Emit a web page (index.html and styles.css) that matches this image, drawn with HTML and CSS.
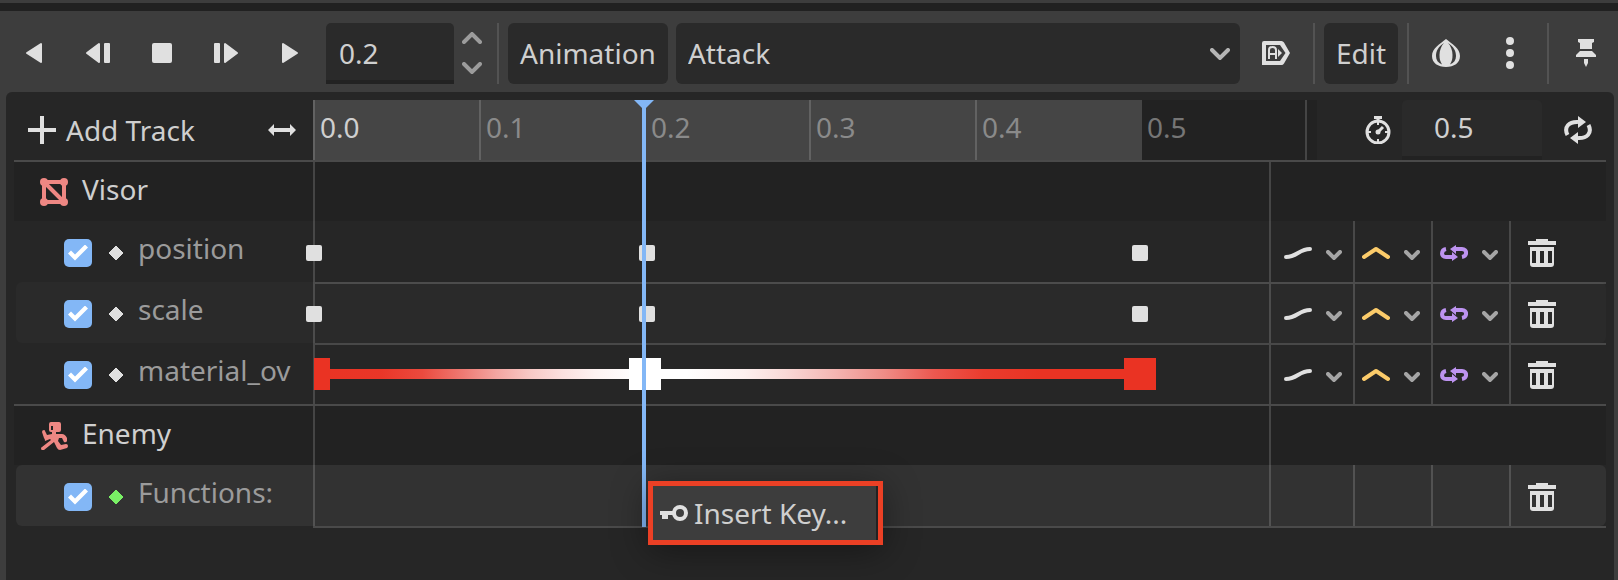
FILE: index.html
```
<!DOCTYPE html>
<html lang="en">
<head>
<meta charset="utf-8">
<title>Animation Editor</title>
<link rel="stylesheet" href="styles.css">
</head>
<body>
<svg class="defs" aria-hidden="true">
  <symbol id="i-chevron" viewBox="0 0 20 12"><path d="M2 2l8 8 8-8" fill="none" stroke="currentColor" stroke-width="4" stroke-linecap="round"/></symbol>
  <symbol id="i-chevron-small" viewBox="0 0 16 10"><path d="M2 2l6 6 6-6" fill="none" stroke="currentColor" stroke-width="4" stroke-linecap="round"/></symbol>
  <symbol id="i-diamond" viewBox="0 0 16 16"><path d="M8 1l7 7-7 7-7-7z" fill="currentColor" stroke="currentColor" stroke-linejoin="round"/></symbol>
  <symbol id="i-curve" viewBox="0 0 28 28"><path d="M2 18C13 18 15 10 26 10" fill="none" stroke="currentColor" stroke-width="4" stroke-linecap="round"/></symbol>
  <symbol id="i-peak" viewBox="0 0 28 28"><path d="M2 18L14 10l12 8" fill="none" stroke="currentColor" stroke-width="4" stroke-linecap="round" stroke-linejoin="round"/></symbol>
  <symbol id="i-wrap" viewBox="0 0 28 28"><g fill="none" stroke="currentColor" stroke-width="4"><path d="M6 10C1 11 .5 18 6 18h7M22 18C27.500 17 27.500 10 22 10h-7"/></g><path d="M12 13l6 5-6 4zM16 6v9l-6-5z" fill="currentColor"/></symbol>
  <symbol id="i-trash" viewBox="0 0 28 28"><path d="M8 0h12v2h8v4H0V2h8zM2 8h24v17q0 3-3 3H5q-3 0-3-3zM4 12v12h4V12zm8 0v12h4V12zm8 0v12h4V12z" fill="currentColor" fill-rule="evenodd"/></symbol>
</svg>

<header class="toolbar">
  <button class="tool" aria-label="Play backwards"><svg width="28" height="28" viewBox="0 0 28 28"><path d="M21 5v18L7 14z" class="solid"/></svg></button>
  <button class="tool" aria-label="Step back"><svg width="28" height="28" viewBox="0 0 28 28"><path d="M15 5v18L3 14z" class="solid"/><rect x="20" y="4" width="6" height="20" rx="1" fill="currentColor"/></svg></button>
  <button class="tool" aria-label="Stop"><svg width="28" height="28" viewBox="0 0 28 28"><rect x="4" y="4" width="20" height="20" rx="2" fill="currentColor"/></svg></button>
  <button class="tool" aria-label="Step forward"><svg width="28" height="28" viewBox="0 0 28 28"><path d="M13 5v18l12-9z" class="solid"/><rect x="2" y="4" width="6" height="20" rx="1" fill="currentColor"/></svg></button>
  <button class="tool" aria-label="Play"><svg width="28" height="28" viewBox="0 0 28 28"><path d="M7 5v18l14-9z" class="solid"/></svg></button>
  <div class="spin">
    <input class="field" type="text" value="0.2" aria-label="Current time">
    <div class="spin-arrows">
      <button class="arrow up" aria-label="Increase"><svg width="20" height="12"><use href="#i-chevron"/></svg></button>
      <button class="arrow" aria-label="Decrease"><svg width="20" height="12"><use href="#i-chevron"/></svg></button>
    </div>
  </div>
  <span class="sep"></span>
  <button class="btn">Animation</button>
  <div class="picker">
    <select class="select" aria-label="Animation name"><option>Attack</option></select>
    <svg class="picker-arrow" width="20" height="12"><use href="#i-chevron"/></svg>
  </div>
  <button class="tool" aria-label="Autoplay on load"><svg width="28" height="28" viewBox="0 0 28 28"><path d="M2 2h17.500q1.500 0 2.500 1.500l6 10.500-6 10.500q-1 1.500-2.500 1.500H0V4q0-2 2-2zM4 6v16h14l5.500-8L18 6z" fill="currentColor" fill-rule="evenodd"/><path d="M7 20v-9q0-3 3.500-3t3.500 3v9M7 15h7" fill="none" stroke="currentColor" stroke-width="2"/><path d="M16 10l4 4-4 4z" fill="currentColor"/></svg></button>
  <span class="sep"></span>
  <button class="btn">Edit</button>
  <span class="sep"></span>
  <button class="tool" aria-label="Onion skinning"><svg width="28" height="28" viewBox="0 0 28 28"><path d="M14 0C20 5 28 9 28 17c0 7-6 11-14 11S0 24 0 17C0 9 8 5 14 0z" fill="currentColor"/><path d="M12 4C6 8 4 12 4 17c0 4 2 7 6 8.500C8 22 7.500 20 7.500 16 7.500 12 9 7 12 4zM16 4c6 4 8 8 8 13 0 4-2 7-6 8.500 2-3.500 2.500-5.500 2.500-9.500 0-4-1.500-9-4.500-12z" fill="#3d3d3d"/></svg></button>
  <button class="tool" aria-label="Onion skinning options"><svg width="28" height="32" viewBox="0 0 28 32"><g fill="currentColor"><circle cx="14" cy="4" r="4"/><circle cx="14" cy="16" r="4"/><circle cx="14" cy="28" r="4"/></g></svg></button>
  <span class="sep"></span>
  <button class="tool" aria-label="Pin"><svg width="28" height="28" viewBox="0 0 28 28"><path d="M6 0h16v3l-2 1v6H8V4L6 3zM8 12h12l4 4v2H4v-2zM12 20h4v4l-2 4-2-4z" fill="currentColor"/></svg></button>
</header>

<main class="panel">
  <div class="editor">
    <div class="head">
      <div class="head-name">
        <button class="add"><svg width="28" height="28" viewBox="0 0 28 28"><path d="M14 0v28M0 14h28" stroke="currentColor" stroke-width="4"/></svg>Add Track</button>
        <svg width="28" height="14" viewBox="0 0 28 14"><path d="M0 7l6-6v4h16V1l6 6-6 6V9H6v4z" fill="currentColor"/></svg>
      </div>
      <div class="ruler">
        <div class="range"><span class="now">0.0</span><span>0.1</span><span>0.2</span><span>0.3</span><span>0.4</span></div>
        <span class="after">0.5</span><span class="tail"></span>
      </div>
      <div class="length">
        <svg width="28" height="28" viewBox="0 0 28 28"><g fill="none" stroke="currentColor"><circle cx="14" cy="16" r="11" stroke-width="3"/><path d="M14 1v5M10 1.500h8M14 16l5-5" stroke-width="3"/><path d="M14 6v3M14 23v3M3 16h4M21 16h4" stroke-width="2"/></g><circle cx="14" cy="16" r="2.500" fill="currentColor"/></svg>
        <input class="field length-field" type="text" value="0.5" aria-label="Animation length">
        <button class="tool" aria-label="Loop"><svg width="28" height="28" viewBox="0 0 28 28"><g fill="none" stroke="currentColor" stroke-width="4"><path d="M3.500 19C-.5 11 5 5.500 14 6M24.500 9C28.500 17 23 22.500 14 22"/></g><path d="M14 0l8 6-8 6zM14 16v12l-8-6z" fill="currentColor"/></svg></button>
      </div>
    </div>

    <div class="row group">
      <div class="name"><svg width="28" height="28" viewBox="0 0 28 28"><path d="M4 4h20v20H4zl20 20" fill="none" stroke="currentColor" stroke-width="4"/><g fill="currentColor"><circle cx="4" cy="4" r="4"/><circle cx="24" cy="4" r="4"/><circle cx="4" cy="24" r="4"/><circle cx="24" cy="24" r="4"/></g></svg><span>Visor</span></div>
      <div class="lane"></div><div class="cell"></div>
    </div>

    <div class="row track bare">
      <div class="name"><input type="checkbox" id="t1" checked><svg class="kind" width="16" height="16"><use href="#i-diamond"/></svg><label for="t1">position</label></div>
      <div class="lane"><i class="key" style="--t:0"></i><i class="key" style="--t:.2015"></i><i class="key" style="--t:.5"></i></div>
      <button class="cell" aria-label="Update mode"><svg width="28" height="28"><use href="#i-curve"/></svg><svg class="small" width="16" height="10"><use href="#i-chevron-small"/></svg></button>
      <button class="cell peak" aria-label="Interpolation"><svg width="28" height="28"><use href="#i-peak"/></svg><svg class="small" width="16" height="10"><use href="#i-chevron-small"/></svg></button>
      <button class="cell wrap" aria-label="Loop wrap"><svg width="28" height="28"><use href="#i-wrap"/></svg><svg class="small" width="16" height="10"><use href="#i-chevron-small"/></svg></button>
      <button class="cell bin" aria-label="Delete track"><svg width="28" height="28"><use href="#i-trash"/></svg></button>
    </div>

    <div class="row track odd">
      <div class="name"><input type="checkbox" id="t2" checked><svg class="kind" width="16" height="16"><use href="#i-diamond"/></svg><label for="t2">scale</label></div>
      <div class="lane"><i class="key" style="--t:0"></i><i class="key" style="--t:.2015"></i><i class="key" style="--t:.5"></i></div>
      <button class="cell" aria-label="Update mode"><svg width="28" height="28"><use href="#i-curve"/></svg><svg class="small" width="16" height="10"><use href="#i-chevron-small"/></svg></button>
      <button class="cell peak" aria-label="Interpolation"><svg width="28" height="28"><use href="#i-peak"/></svg><svg class="small" width="16" height="10"><use href="#i-chevron-small"/></svg></button>
      <button class="cell wrap" aria-label="Loop wrap"><svg width="28" height="28"><use href="#i-wrap"/></svg><svg class="small" width="16" height="10"><use href="#i-chevron-small"/></svg></button>
      <button class="cell bin" aria-label="Delete track"><svg width="28" height="28"><use href="#i-trash"/></svg></button>
    </div>

    <div class="row track">
      <div class="name"><input type="checkbox" id="t3" checked><svg class="kind" width="16" height="16"><use href="#i-diamond"/></svg><label for="t3">material_ov</label></div>
      <div class="lane"><i class="blend"></i><i class="swatch first" style="--t:0"></i><i class="swatch white" style="--t:.2003"></i><i class="swatch" style="--t:.5"></i></div>
      <button class="cell" aria-label="Update mode"><svg width="28" height="28"><use href="#i-curve"/></svg><svg class="small" width="16" height="10"><use href="#i-chevron-small"/></svg></button>
      <button class="cell peak" aria-label="Interpolation"><svg width="28" height="28"><use href="#i-peak"/></svg><svg class="small" width="16" height="10"><use href="#i-chevron-small"/></svg></button>
      <button class="cell wrap" aria-label="Loop wrap"><svg width="28" height="28"><use href="#i-wrap"/></svg><svg class="small" width="16" height="10"><use href="#i-chevron-small"/></svg></button>
      <button class="cell bin" aria-label="Delete track"><svg width="28" height="28"><use href="#i-trash"/></svg></button>
    </div>

    <div class="row group">
      <div class="name"><svg width="28" height="28" viewBox="0 0 28 28"><path d="M11 0h8q2 0 2 2v6q0 2-2 2h-3v2h6q3 0 5 4v3q-1 2-3 1l-2-4h-3l-1 3 3 4 5-1q2 0 2 2 0 1-1 2l-7 2q-2 0-3-2l-3-6-10 8q-2 1-3-1 0-2 1-2l9-7-1-1-5 2Q5 17 4 16L2 10q0-2 2-2 1 0 1 1l2 4 5-1V10H11q-2 0-2-2V2q0-2 2-2zM11 4v4h2V4z" fill="currentColor" fill-rule="evenodd"/></svg><span>Enemy</span></div>
      <div class="lane"></div><div class="cell"></div>
    </div>

    <div class="row track bare selected">
      <div class="name"><input type="checkbox" id="t4" checked><svg class="kind green" width="16" height="16"><use href="#i-diamond"/></svg><label for="t4">Functions:</label></div>
      <div class="lane"></div>
      <div class="cell"></div><div class="cell"></div><div class="cell"></div>
      <button class="cell bin" aria-label="Delete track"><svg width="28" height="28"><use href="#i-trash"/></svg></button>
    </div>
    <div class="end"></div>

    <div class="playhead"></div>
    <div class="menu"><button class="menu-item"><svg width="28" height="16" viewBox="0 0 28 16"><circle cx="20" cy="8" r="6" fill="none" stroke="currentColor" stroke-width="4"/><path d="M0 6h14v4H8v4H2v-4H0z" fill="currentColor"/></svg>Insert Key...</button></div>
  </div>
</main>
</body>
</html>
```
FILE: styles.css
```
* { box-sizing: border-box; }

body {
  --line: rgba(255, 255, 255, .16);
  --text: #cfcfcf;
  --icon: #e0e0e0;
  margin: 0;
  min-height: 100vh;
  display: flex;
  flex-direction: column;
  background: #3d3d3d;
  color: var(--text);
  font: 28px/38px "Noto Sans", sans-serif;
  overflow: hidden;
}

body::before {
  content: "";
  height: 8px;
  margin-top: 3px;
  background: #212121;
}

button, input, select {
  margin: 0;
  padding: 0;
  border: 0;
  background: none;
  color: inherit;
  font: inherit;
}

svg { display: block; flex: none; }
.defs { position: absolute; width: 0; height: 0; }
.solid { fill: currentColor; stroke: currentColor; stroke-width: 2; stroke-linejoin: round; }

.toolbar {
  display: flex;
  gap: 8px;
  padding: 12px 4px 8px 6px;
}

.tool {
  flex: none;
  width: 56px;
  display: flex;
  align-items: center;
  justify-content: center;
  color: var(--icon);
}
.toolbar .tool { padding-bottom: 1px; }

.sep {
  flex: none;
  width: 4px;
  border: solid transparent;
  border-width: 0 1px;
  background: #535353;
  background-clip: padding-box;
}

.field {
  width: 128px;
  height: 61px;
  padding-left: 13px;
  border-bottom: 4px solid #222;
  border-radius: 5px 5px 0 0;
  background: #2a2a2a;
}

.toolbar .field { padding-top: 2px; }
.spin { display: flex; gap: 8px; width: 162px; }
.spin-arrows { display: flex; flex-direction: column; justify-content: center; gap: 18px; padding-bottom: 1px; }
.arrow { color: #9c9c9c; }
.up svg { transform: rotate(180deg); }

.btn, .select {
  border-radius: 6px;
  background: #2a2a2a;
  padding: 0 12px 1px;
}

.picker { flex: 1; display: grid; align-items: center; }
.picker > * { grid-area: 1 / 1; }
.select { width: 100%; height: 61px; appearance: none; }
.picker-arrow { justify-self: end; margin-right: 10px; color: #b5b5b5; pointer-events: none; }

.panel {
  flex: 1;
  margin: 0 4px 0 6px;
  padding: 8px;
  border-radius: 6px 6px 0 0;
  background: #262626;
}

.editor { position: relative; }

.head { display: flex; height: 60px; color: var(--icon); }
.head-name {
  flex: 0 0 299px;
  display: flex;
  align-items: center;
  justify-content: space-between;
  padding: 0 17px 0 14px;
}
.add { display: flex; align-items: center; gap: 10px; color: var(--text); }
.add svg { color: var(--icon); }

.ruler {
  flex: 1;
  display: flex;
  background: #222;
  color: #767676;
  line-height: 54px;
}
.range {
  flex: 0 0 829px;
  display: grid;
  grid-template-columns: 166px 165px 165px 166px 1fr;
  background: #454545;
  color: #8a8a8a;
}
.range span { padding-left: 5px; border-left: 2px solid var(--line); }
.range .now { color: var(--text); }
.after { flex: 0 0 163px; padding-left: 5px; }
.tail { border-left: 2px solid var(--line); }

.length {
  flex: 0 0 289px;
  display: flex;
  align-items: center;
  padding-left: 47px;
  gap: 10px;
}
.length-field { width: 140px; height: 60px; padding: 0 0 2px 32px; color: var(--text); }
.length .tool { margin-left: -2px; }

.row {
  display: grid;
  grid-template-columns: 299px 1fr 84px 78px 78px 97px;
  height: 61px;
}
.name {
  display: flex;
  align-items: center;
  padding: 2px 0 0 50px;
  border-radius: 6px 0 0 6px;
  overflow: hidden;
}
.lane { position: relative; border-left: 2px solid var(--line); }
.cell {
  display: flex;
  align-items: center;
  border-left: 2px solid var(--line);
  padding: 2px 0 0 13px;
  color: var(--icon);
}

.group { border-top: 2px solid #4a4a4a; background: #222; }
.group .name { padding: 0 0 0 26px; gap: 14px; color: #ee8783; }
.group .name span { color: var(--text); padding-bottom: 6px; }
.group .cell { grid-column: 3 / -1; }

.track .lane, .track .cell { box-shadow: inset 0 2px var(--line); }
.bare .lane, .bare .cell { box-shadow: none; }
.track { margin-left: 2px; grid-template-columns: 297px 1fr 84px 78px 78px 97px; border-radius: 6px; }
.track .name { padding-left: 48px; }
.track label { color: #9b9b9b; padding-bottom: 9px; }
.odd { background: #2a2a2a; }
.selected { background: #323232; }

input[type="checkbox"] {
  appearance: none;
  flex: none;
  width: 28px;
  height: 28px;
  border-radius: 5px;
  background: #83b7f6;
  display: grid;
  place-items: center;
}
input[type="checkbox"]::after {
  content: "";
  width: 20px;
  height: 16px;
  background: #fff;
  clip-path: polygon(0 9px, 3px 6px, 7px 10px, 17px 0, 20px 3px, 7px 16px);
}
.kind { margin: 0 14px 0 16px; color: var(--icon); }
.green { color: #79f065; }

.peak > svg:first-child { color: #fbcb6a; }
.wrap > svg:first-child { color: #bd93f0; }
.cell.peak, .cell.wrap { padding-left: 7px; }
.cell .small { margin: 5px 0 0 14px; color: #a5a5a5; }
.cell.bin { padding-left: 17px; }

/* Keys sit on the lane at --t seconds, at 1652px per second. */
.key, .swatch {
  position: absolute;
  top: 24px;
  left: calc(var(--t) * 1652px - 9px);
  width: 16px;
  height: 16px;
  border-radius: 2px;
  background: var(--icon);
}
.swatch {
  top: 15px;
  left: calc(var(--t) * 1652px - 17px);
  width: 32px;
  height: 32px;
  border-radius: 0;
  background: #ea3323;
}
.first { clip-path: inset(0 0 0 16px); }
.white { background: #fff; }
.blend {
  position: absolute;
  top: 26px;
  left: 0;
  width: 825px;
  height: 10px;
  background: linear-gradient(90deg, #ea3323 0, #ea3628 8%, #eb4a3e 13%, #ee7b74 18%, #f3a5a1 22%, #f7c8c5 26%, #fbe0df 30%, #fef3f2 34%, #fff 39%, #fff 45%, #fdf0ef 52%, #f9d9d7 57%, #f4b5b2 63%, #ef8c86 69%, #ec5850 75%, #ea3c2e 81%, #ea3323 88%);
}

.end { height: 2px; margin-left: 299px; background: #4a4a4a; }

.playhead {
  position: absolute;
  top: 0;
  bottom: 1px;
  left: 620px;
  width: 20px;
  background: #83b7f6;
  clip-path: polygon(0 0, 20px 0, 12px 8px, 12px 100%, 8px 100%, 8px 8px);
}

.menu {
  position: absolute;
  top: 381px;
  left: 634px;
  width: 235px;
  border: 5px solid #eb4025;
  padding-right: 2px;
  background: #222;
  box-shadow: 0 6px 36px rgba(0, 0, 0, .4);
}
.menu-item {
  display: flex;
  align-items: center;
  gap: 6px;
  width: 100%;
  height: 54px;
  padding-left: 7px;
  background: #3d3d3d;
}
.menu-item svg { color: var(--icon); }
```
